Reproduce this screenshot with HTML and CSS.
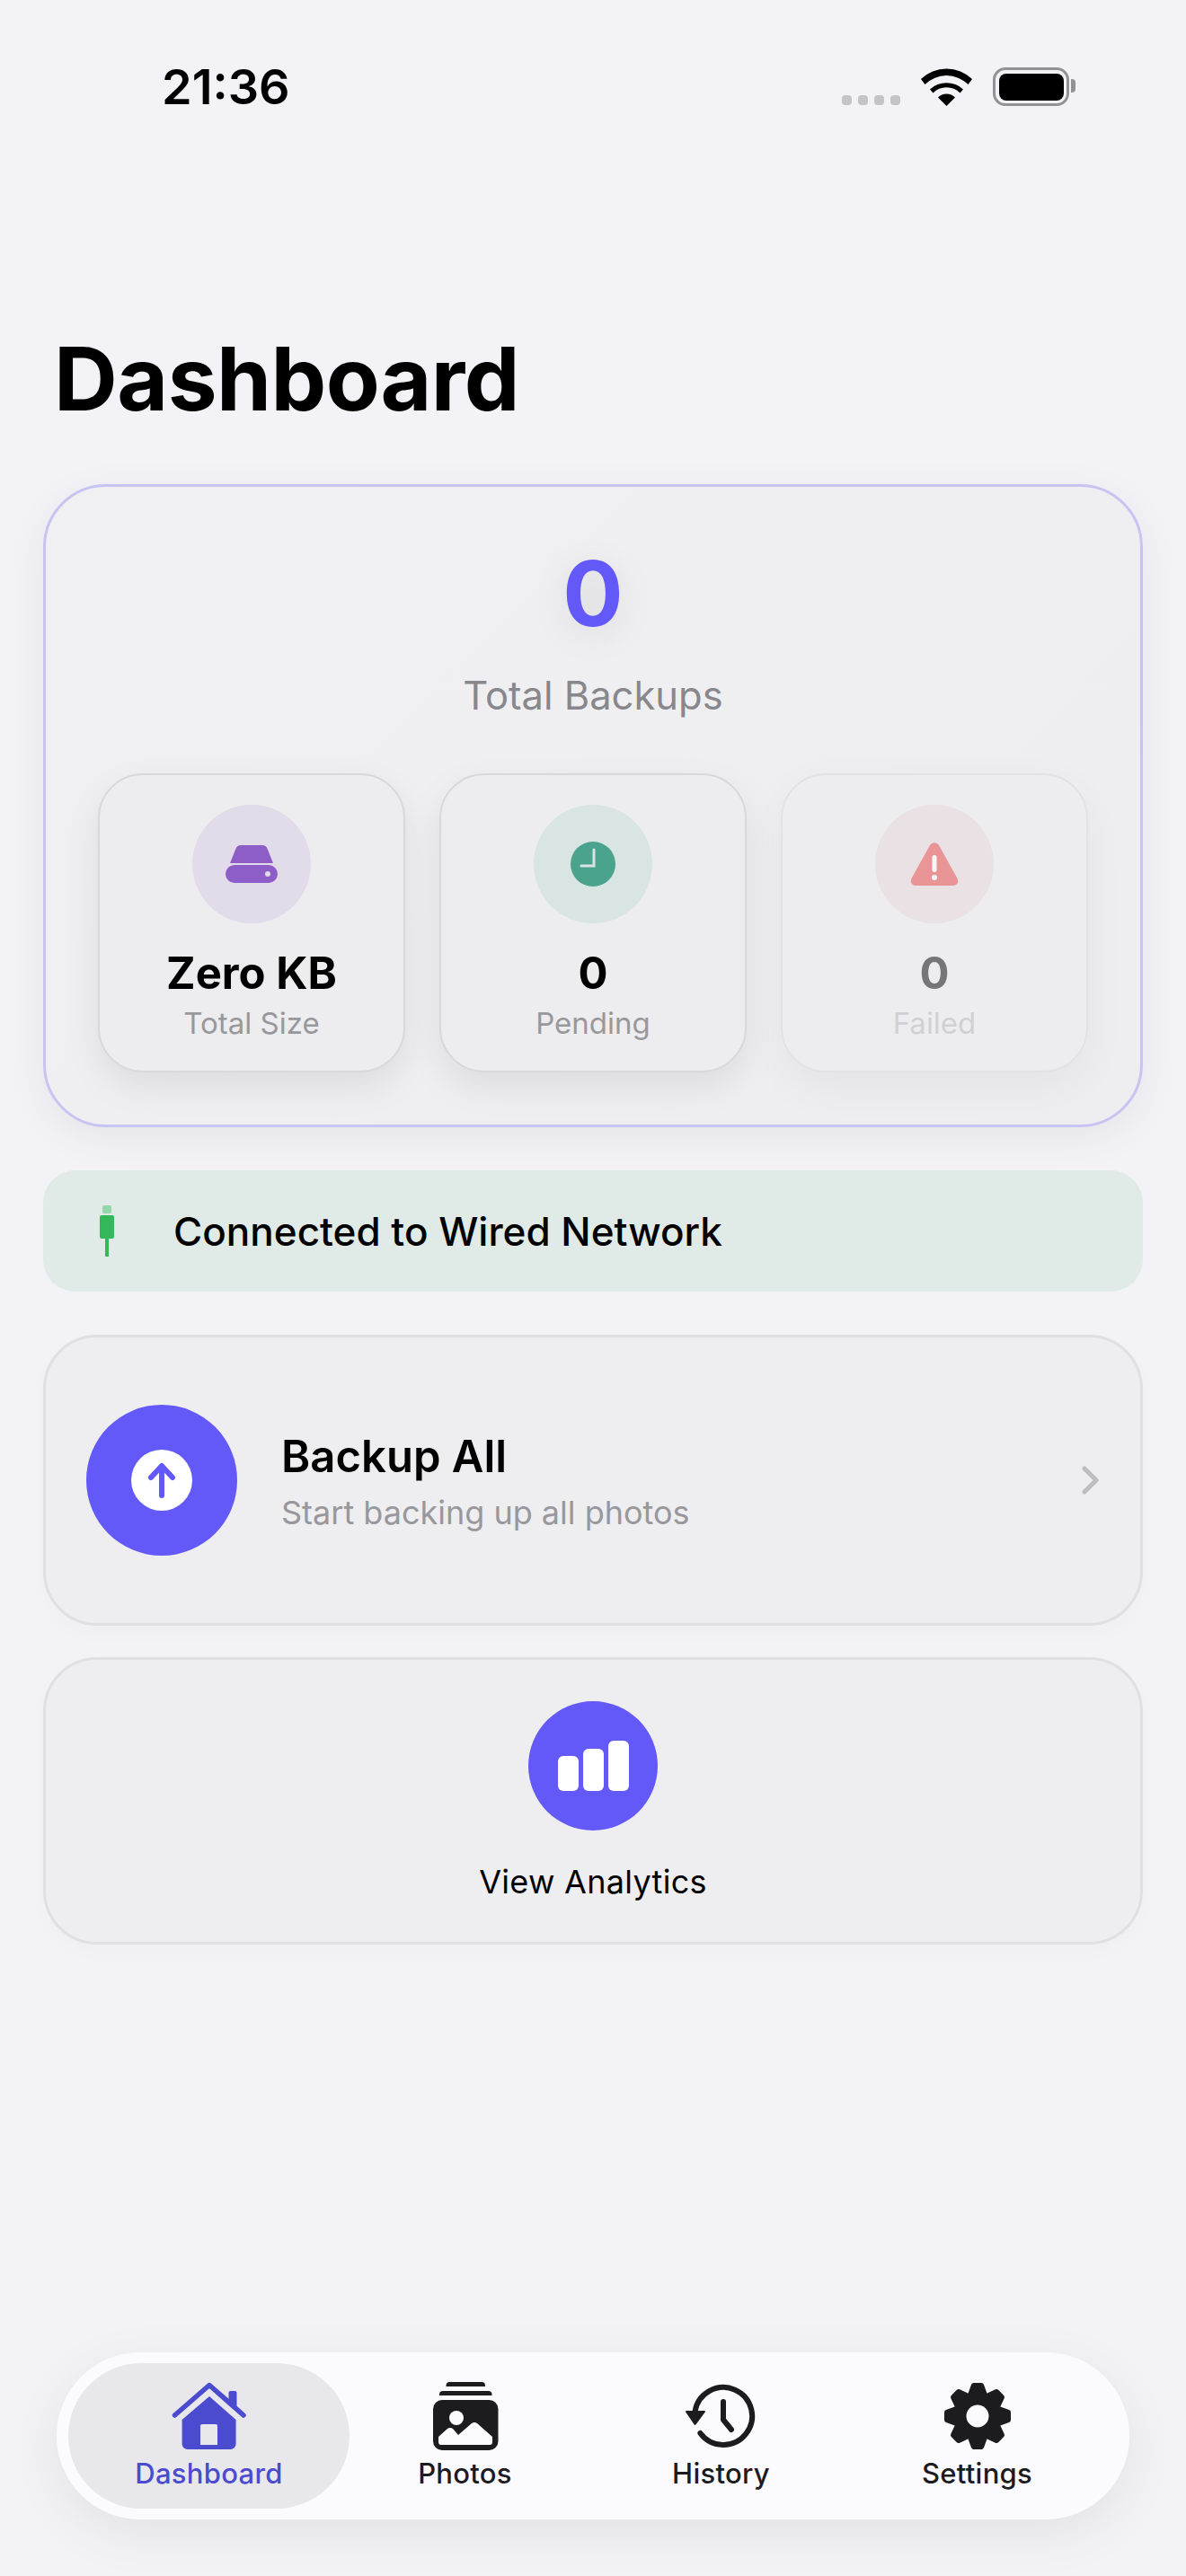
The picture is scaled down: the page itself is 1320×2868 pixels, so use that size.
FILE: index.html
```html
<!DOCTYPE html>
<html lang="en">
<head>
    <meta charset="UTF-8">
    <meta name="viewport" content="width=device-width, initial-scale=1.0">
    <title>Dashboard</title>
    <link rel="stylesheet" href="styles.css">
</head>
<body>
    <div class="page">
        <div class="status-bar">
            <span class="time">21:36</span>
            <div class="status-icons">
                <div class="signal"><i></i><i></i><i></i><i></i></div>
                <svg class="wifi" width="57" height="42" viewBox="0 0 57 42">
                    <path d="M0 12A41 41 0 0 1 57 12L52.5 18A34 34 0 0 0 4.500 18Z"/>
                    <path d="M10 23.500A27 27 0 0 1 47 23.500L43.500 27.500A21 21 0 0 0 13.500 27.500Z"/>
                    <path d="M19 32.500A13.500 13.500 0 0 1 38 32.500L28.500 42Z"/>
                </svg>
                <div class="battery"><div class="battery-level"></div></div>
            </div>
        </div>

        <h1>Dashboard</h1>

        <div class="summary-card">
            <div class="total-value">0</div>
            <div class="total-label">Total Backups</div>
            <div class="stats">
                <div class="stat-card">
                    <div class="stat-icon purple">
                        <svg width="58" height="42" viewBox="0 0 58 42">
                            <path d="M17 0H41C44 0 46 1.500 47 5L53 20H5L11 5C12 1.500 14 0 17 0Z" fill="#8e5ec8"/>
                            <path fill-rule="evenodd" d="M10 22H48A10 10 0 0 1 58 32A10 10 0 0 1 48 42H10A10 10 0 0 1 0 32A10 10 0 0 1 10 22ZM47 29A3 3 0 1 0 47 35A3 3 0 1 0 47 29Z" fill="#8e5ec8"/>
                        </svg>
                    </div>
                    <div class="stat-value">Zero KB</div>
                    <div class="stat-label">Total Size</div>
                </div>
                <div class="stat-card">
                    <div class="stat-icon teal">
                        <svg width="50" height="50" viewBox="0 0 50 50">
                            <circle cx="25" cy="25" r="25" fill="#4aa38d"/>
                            <path d="M26 9V27H12" fill="none" stroke="#d8e5e2" stroke-width="3" stroke-linecap="round"/>
                        </svg>
                    </div>
                    <div class="stat-value">0</div>
                    <div class="stat-label">Pending</div>
                </div>
                <div class="stat-card faded">
                    <div class="stat-icon red">
                        <svg width="54" height="48" viewBox="0 0 54 48">
                            <path d="M21.500 4C24 -1 30 -1 32.500 4L52.500 40C54.500 44 52 48 48 48H6C2 48 -0.500 44 1.500 40Z" fill="#e53e3e"/>
                            <rect x="24.500" y="14" width="5" height="19" rx="2.500" fill="#fff"/>
                            <circle cx="27" cy="39" r="3" fill="#fff"/>
                        </svg>
                    </div>
                    <div class="stat-value">0</div>
                    <div class="stat-label">Failed</div>
                </div>
            </div>
        </div>

        <div class="network-banner">
            <svg width="16" height="57" viewBox="0 0 16 57">
                <rect x="3" y="0" width="10" height="9" rx="2" fill="#93d8aa"/>
                <rect x="0" y="11" width="16" height="26" rx="2" fill="#34b85c"/>
                <rect x="6" y="37" width="4" height="20" fill="#34b85c"/>
            </svg>
            <span>Connected to Wired Network</span>
        </div>

        <div class="action-card backup">
            <div class="backup-circle">
                <div class="backup-inner">
                    <svg width="36" height="40" viewBox="0 0 36 40">
                        <path d="M18 37V5M6 17L18 4L30 17" fill="none" stroke="#6259f8" stroke-width="6" stroke-linecap="round" stroke-linejoin="round"/>
                    </svg>
                </div>
            </div>
            <div class="backup-text">
                <div class="backup-title">Backup All</div>
                <div class="backup-sub">Start backing up all photos</div>
            </div>
            <svg class="chevron" width="22" height="32" viewBox="0 0 22 32">
                <path d="M6 3L19 16L6 29" fill="none" stroke="#bebec2" stroke-width="5" stroke-linecap="round" stroke-linejoin="round"/>
            </svg>
        </div>

        <div class="action-card analytics">
            <div class="analytics-circle">
                <div class="bar bar-1"></div>
                <div class="bar bar-2"></div>
                <div class="bar bar-3"></div>
            </div>
            <div class="analytics-label">View Analytics</div>
        </div>

        <div class="tab-bar">
            <div class="tab active">
                <svg width="90" height="80" viewBox="0 0 90 80">
                    <path d="M6.500 39L45 5.500L83 39" fill="none" stroke="#4b4bcf" stroke-width="5.500" stroke-linecap="round" stroke-linejoin="round"/>
                    <path d="M66.500 22V14a2 2 0 0 1 2-2H73.500a2 2 0 0 1 2 2V30Z" fill="#4b4bcf"/>
                    <path fill-rule="evenodd" d="M45 18L74.600 44V71A6 6 0 0 1 68.600 77H20.600A6 6 0 0 1 14.600 71V44ZM37 49A2 2 0 0 0 35 51V72H54V51A2 2 0 0 0 52 49Z" fill="#4b4bcf"/>
                </svg>
                <span>Dashboard</span>
            </div>
            <div class="tab">
                <svg width="80" height="80" viewBox="0 0 80 80">
                    <path d="M18.500 7V6A4 4 0 0 1 22.500 2H58A4 4 0 0 1 62 6V7Z" fill="#1c1c1f"/>
                    <path d="M11 17V16A4 4 0 0 1 15 12H65.500A4 4 0 0 1 69.500 16V17Z" fill="#1c1c1f"/>
                    <rect x="4" y="22" width="72.500" height="56" rx="10" fill="#1c1c1f"/>
                    <circle cx="30" cy="42" r="8" fill="#fbfbff"/>
                    <path d="M10 63L20 54C22 52.500 24 52.500 26 54L32 61L47 48C49 46.500 51 46.500 53 48L70 63V69A3 3 0 0 1 67 72H13A3 3 0 0 1 10 69Z" fill="#fbfbff"/>
                </svg>
                <span>Photos</span>
            </div>
            <div class="tab">
                <svg width="84" height="80" viewBox="0 0 84 80">
                    <path d="M18.400 59A32 32 0 1 0 12.500 35" fill="none" stroke="#1c1c1f" stroke-width="6" stroke-linecap="round"/>
                    <path d="M3 35H23L12.600 49Z" fill="#1c1c1f" stroke="#1c1c1f" stroke-width="2" stroke-linejoin="round"/>
                    <path d="M44 24V44L53 55" fill="none" stroke="#1c1c1f" stroke-width="6" stroke-linecap="round" stroke-linejoin="round"/>
                </svg>
                <span>History</span>
            </div>
            <div class="tab">
                <svg width="80" height="80" viewBox="-40 -40 80 80">
                    <g fill="#1c1c1f">
                        <circle r="27"/>
                        <g id="teeth">
                            <path id="tooth" d="M-11 -24L-7 -35A3 3 0 0 1 -4 -37H4A3 3 0 0 1 7 -35L11 -24Z"/>
                            <use href="#tooth" transform="rotate(45)"/>
                            <use href="#tooth" transform="rotate(90)"/>
                            <use href="#tooth" transform="rotate(135)"/>
                        </g>
                        <use href="#teeth" transform="rotate(180)"/>
                    </g>
                    <circle r="12.500" fill="#fbfbff"/>
                </svg>
                <span>Settings</span>
            </div>
        </div>
    </div>
</body>
</html>
```

FILE: styles.css
```css
* {
    box-sizing: border-box;
}
body {
    margin: 0;
    font-family: Inter, "Noto Sans", sans-serif;
    background-color: #f2f2f7;
    color: #000;
}
.page {
    width: 1320px;
    height: 2868px;
    display: flex;
    flex-direction: column;
    overflow: hidden;
}
.status-bar {
    display: flex;
    justify-content: space-between;
    align-items: flex-start;
    padding: 75px 130px 0 180px;
    height: 118px;
}
.time {
    font-size: 54px;
    font-weight: 600;
    line-height: 44px;
}
.status-icons {
    display: flex;
    align-items: flex-end;
}
.signal {
    display: flex;
    gap: 7px;
    margin-right: 23px;
    padding-bottom: 1px;
}
.signal i {
    display: block;
    width: 11px;
    height: 11px;
    border-radius: 4px;
    background-color: #c4c4c8;
}
.wifi {
    fill: #000;
    margin-right: 23px;
    display: block;
}
.battery {
    position: relative;
    width: 85px;
    height: 43px;
    border: 3.5px solid #929297;
    border-radius: 14px;
    padding: 3.5px;
}
.battery::after {
    content: "";
    position: absolute;
    left: 84px;
    top: 10px;
    width: 5px;
    height: 15px;
    background-color: #929297;
    border-radius: 0 4px 4px 0;
}
.battery-level {
    height: 100%;
    background-color: #000;
    border-radius: 8px;
}
h1 {
    margin: 246px 0 0 60px;
    font-size: 98px;
    font-weight: 700;
    line-height: 116px;
    height: 116px;
    letter-spacing: -0.5px;
}
.summary-card {
    margin: 59px 48px 0;
    height: 716px;
    border: 3px solid #c8c4f2;
    border-radius: 70px;
    background: linear-gradient(135deg, #f0f0f3, #eeeef1);
    box-shadow: 0 12px 48px rgba(0, 0, 0, 0.06);
    padding: 0 58px;
    text-align: center;
}
.total-value {
    margin-top: 65px;
    font-size: 100px;
    font-weight: 700;
    line-height: 108px;
    color: #6259f8;
    text-shadow: 0 8px 40px rgba(0, 0, 0, 0.1);
}
.total-label {
    margin-top: 32px;
    font-size: 43.5px;
    line-height: 54px;
    color: #87878c;
}
.stats {
    display: flex;
    gap: 38px;
    margin-top: 60px;
}
.stat-card {
    width: 342px;
    height: 333px;
    border: 2px solid #d8d8dc;
    border-radius: 50px;
    background-color: #ededef;
    box-shadow: 0 16px 40px rgba(0, 0, 0, 0.08);
    display: flex;
    flex-direction: column;
    align-items: center;
    padding-top: 33px;
}
.stat-card.faded {
    opacity: 0.5;
}
.stat-icon {
    width: 132px;
    height: 132px;
    border-radius: 50%;
    display: flex;
    align-items: center;
    justify-content: center;
}
.purple {
    background-color: #e1dbea;
}
.teal {
    background-color: #d8e5e2;
}
.red {
    background-color: #e5d5d7;
}
.stat-value {
    margin-top: 26px;
    font-size: 49px;
    font-weight: 700;
    line-height: 60px;
}
.stat-label {
    margin-top: 5px;
    font-size: 33px;
    line-height: 40px;
    color: #98989c;
}
.faded .stat-label {
    color: #b4b4b8;
}
.network-banner {
    margin: 48px 48px 0;
    height: 135px;
    border-radius: 36px;
    background-color: #e0ebe7;
    display: flex;
    align-items: center;
    padding-left: 63px;
    gap: 66px;
    font-size: 44px;
    font-weight: 500;
}
.action-card {
    margin: 0 48px;
    border: 3px solid #e0e0e3;
    border-radius: 60px;
    background-color: #eeeef1;
    box-shadow: 0 8px 24px rgba(0, 0, 0, 0.02);
}
.backup {
    margin-top: 48px;
    height: 324px;
    display: flex;
    align-items: center;
    padding: 0 45px;
}
.backup-circle {
    width: 168px;
    height: 168px;
    border-radius: 50%;
    background-color: #6259f8;
    display: flex;
    align-items: center;
    justify-content: center;
}
.backup-inner {
    width: 68px;
    height: 68px;
    border-radius: 50%;
    background-color: #fff;
    display: flex;
    align-items: center;
    justify-content: center;
}
.backup-text {
    flex: 1;
    margin-left: 49px;
    padding-top: 2px;
}
.backup-title {
    font-size: 49px;
    font-weight: 600;
    line-height: 60px;
}
.backup-sub {
    margin-top: 10px;
    font-size: 36px;
    line-height: 44px;
    color: #98989c;
}
.chevron {
    margin-right: 1px;
}
.analytics {
    margin-top: 35px;
    height: 320px;
    display: flex;
    flex-direction: column;
    align-items: center;
    padding-top: 46px;
}
.analytics-circle {
    width: 144px;
    height: 144px;
    border-radius: 50%;
    background-color: #6259f8;
    display: flex;
    align-items: flex-end;
    justify-content: center;
    gap: 5px;
    padding-bottom: 44px;
}
.bar {
    width: 23px;
    background-color: #fff;
    border-radius: 6px;
}
.bar-1 {
    height: 39px;
}
.bar-2 {
    height: 47px;
}
.bar-3 {
    height: 56px;
}
.analytics-label {
    margin-top: 35px;
    font-size: 36px;
    font-weight: 400;
    letter-spacing: 0.3px;
    line-height: 44px;
}
.tab-bar {
    margin: auto 63px 63px;
    height: 186px;
    border-radius: 93px;
    background-color: #fbfbff;
    box-shadow: 0 16px 60px rgba(0, 0, 0, 0.07);
    padding: 12px 27px;
    display: grid;
    grid-template-columns: repeat(4, 285px);
}
.tab {
    display: flex;
    flex-direction: column;
    align-items: center;
    padding-top: 19px;
    color: #1c1c1f;
}
.tab svg {
    display: block;
}
.tab span {
    margin-top: 5px;
    font-size: 31px;
    font-weight: 450;
    letter-spacing: 0.3px;
    line-height: 38px;
}
.tab.active {
    margin: 0 -14px;
    border-radius: 81px;
    background-color: #e8e8ec;
    color: #4b4bcf;
}
```
